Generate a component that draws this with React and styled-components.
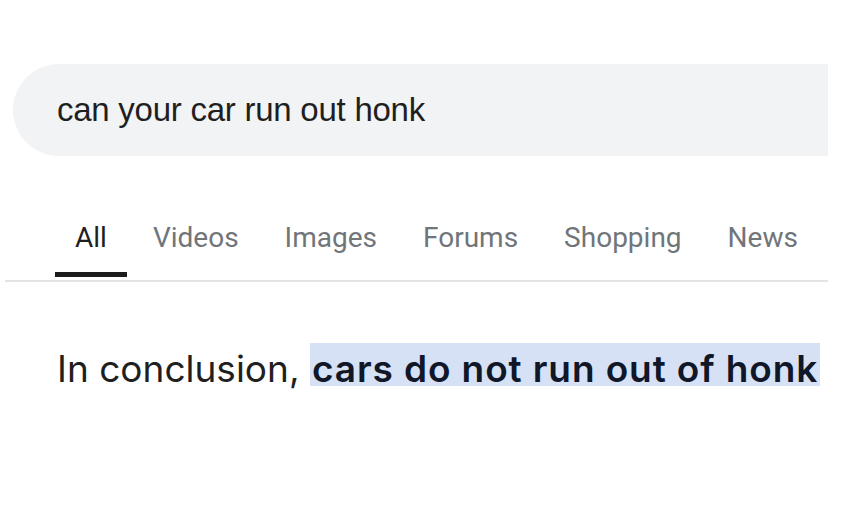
import React from "react";
import styled, { createGlobalStyle } from "styled-components";

const GlobalStyle = createGlobalStyle`
  html, body {
    margin: 0;
    padding: 0;
    background: #ffffff;
  }
`;

const tabs = ["All", "Videos", "Images", "Forums", "Shopping", "News"];

export default function App() {
  return (
    <Page>
      <GlobalStyle />
      <SearchBar>
        <Query>can your car run out honk</Query>
      </SearchBar>
      <TabBar>
        {tabs.map((t, i) => (
          <Tab key={t} $active={i === 0}>
            {t}
          </Tab>
        ))}
      </TabBar>
      <Answer>
        In conclusion, <Mark>cars do not run out of honk</Mark>
      </Answer>
    </Page>
  );
}

const Page = styled.div`
  width: 843px;
  height: 516px;
  padding-top: 64px;
  box-sizing: border-box;
  overflow: hidden;
`;

const SearchBar = styled.div`
  display: flex;
  align-items: center;
  height: 92px;
  margin: 0 15px 0 13px;
  padding-left: 44px;
  background: #f1f3f4;
  border-radius: 46px 0 0 46px;
`;

const Query = styled.span`
  font-family: "Liberation Sans", Arial, sans-serif;
  font-size: 33px;
  letter-spacing: -0.25px;
  color: #1f1f1f;
`;

const TabBar = styled.div`
  display: flex;
  align-items: flex-start;
  gap: 46px;
  margin: 65px 15px 0 5px;
  padding: 0 0 3px 70px;
  border-bottom: 2px solid #e3e3e3;
`;

const Tab = styled.div`
  position: relative;
  padding-bottom: 22px;
  font-family: Roboto, "Liberation Sans", sans-serif;
  font-size: 28px;
  line-height: 34px;
  color: ${(p) => (p.$active ? "#1f1f1f" : "#70757a")};
  &::after {
    content: "";
    display: ${(p) => (p.$active ? "block" : "none")};
    position: absolute;
    left: -20px;
    right: -20px;
    bottom: 0;
    height: 5px;
    background: #1c1c1c;
  }
`;

const Answer = styled.p`
  margin: 63px 0 0 57px;
  font-family: Inter, "Noto Sans", sans-serif;
  font-size: 37px;
  line-height: 48px;
  color: #1f1f1f;
  white-space: nowrap;
`;

const Mark = styled.span`
  padding: 3px 2px 0;
  background: linear-gradient(#d6e1f5, #d6e1f5) top / 100% 43px no-repeat;
  color: #0f1729;
  font-weight: 600;
  letter-spacing: 0.9px;
`;
